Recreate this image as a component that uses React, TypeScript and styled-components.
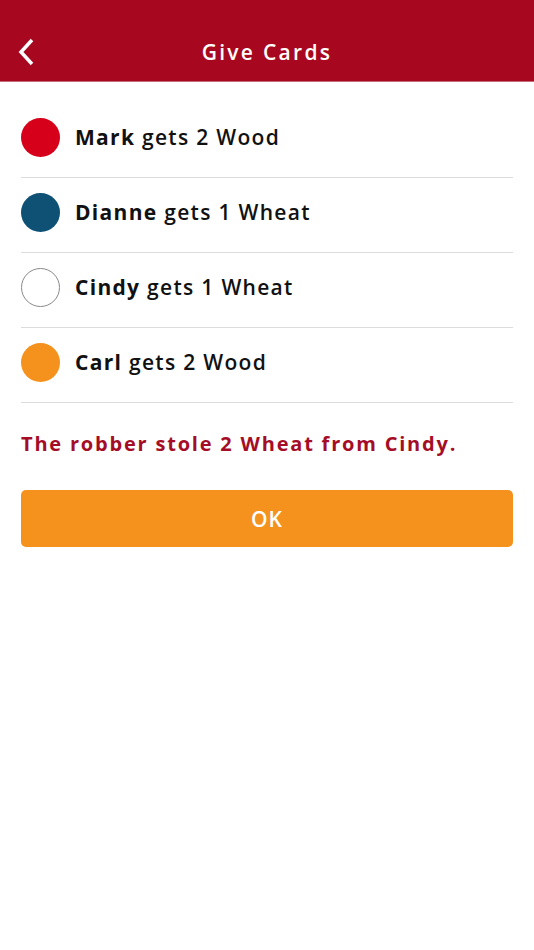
import styled, { createGlobalStyle } from "styled-components";

const GlobalStyle = createGlobalStyle`
  body {
    margin: 0;
    background: #ffffff;
    font-family: "Open Sans", "Liberation Sans", sans-serif;
  }
`;

const Page = styled.div`
  width: 534px;
  min-height: 950px;
  background: #ffffff;
`;

const Header = styled.header`
  height: 82px;
  background: #a8081f;
  border-bottom: 1px solid #c46a77;
  box-sizing: border-box;
  display: flex;
  align-items: center;
  justify-content: center;
  position: relative;
  padding-top: 22px;
`;

const BackButton = styled.button`
  position: absolute;
  left: 14px;
  top: 36px;
  width: 24px;
  height: 32px;
  padding: 0;
  border: none;
  background: none;
  display: flex;
  align-items: center;
  justify-content: center;
`;

const Title = styled.h1`
  margin: 0;
  color: #ffffff;
  font-size: 21px;
  font-weight: 600;
  letter-spacing: 2.3px;
`;

const Content = styled.div`
  padding: 21px 21px 0;
`;

const PlayerList = styled.ul`
  list-style: none;
  margin: 0;
  padding: 0;
`;

const PlayerRow = styled.li`
  height: 75px;
  box-sizing: border-box;
  border-bottom: 1px solid #dcdcdc;
  display: flex;
  align-items: flex-start;
  padding-top: 15px;
  gap: 15px;
`;

const Dot = styled.span<{ $color: string }>`
  width: 39px;
  height: 39px;
  border-radius: 50%;
  box-sizing: border-box;
  background: ${(p) => (p.$color === "white" ? "#ffffff" : p.$color)};
  border: ${(p) => (p.$color === "white" ? "1.5px solid #8a8a8a" : "none")};
  flex-shrink: 0;
`;

const PlayerText = styled.span`
  font-size: 21px;
  font-weight: 600;
  color: #111111;
  line-height: 39px;
  letter-spacing: 1.3px;
`;

const Name = styled.strong`
  font-weight: 700;
`;

const Message = styled.p`
  margin: 28px 0 0;
  color: #a50d27;
  font-size: 20px;
  font-weight: 700;
  letter-spacing: 1.8px;
  line-height: 26px;
`;

const OkButton = styled.button`
  margin-top: 33px;
  width: 100%;
  height: 57px;
  border: none;
  border-radius: 5px;
  background: #f5921e;
  color: #ffffff;
  font-family: inherit;
  font-size: 21px;
  font-weight: 600;
  letter-spacing: 1px;
`;

interface IGift {
  name: string;
  color: string;
  amount: number;
  resource: string;
}

const gifts: IGift[] = [
  { name: "Mark", color: "#d7001b", amount: 2, resource: "Wood" },
  { name: "Dianne", color: "#0f5075", amount: 1, resource: "Wheat" },
  { name: "Cindy", color: "white", amount: 1, resource: "Wheat" },
  { name: "Carl", color: "#f5921e", amount: 2, resource: "Wood" },
];

const App = () => {
  return (
    <Page>
      <GlobalStyle />
      <Header>
        <BackButton aria-label="Back">
          <svg width="20" height="30" viewBox="0 0 20 30">
            <polyline
              points="16,3 5,15 16,27"
              fill="none"
              stroke="#ffffff"
              strokeWidth="3.5"
            />
          </svg>
        </BackButton>
        <Title>Give Cards</Title>
      </Header>
      <Content>
        <PlayerList>
          {gifts.map((g) => (
            <PlayerRow key={g.name}>
              <Dot $color={g.color} />
              <PlayerText>
                <Name>{g.name}</Name> gets {g.amount} {g.resource}
              </PlayerText>
            </PlayerRow>
          ))}
        </PlayerList>
        <Message>The robber stole 2 Wheat from Cindy.</Message>
        <OkButton>OK</OkButton>
      </Content>
    </Page>
  );
};

export default App;
